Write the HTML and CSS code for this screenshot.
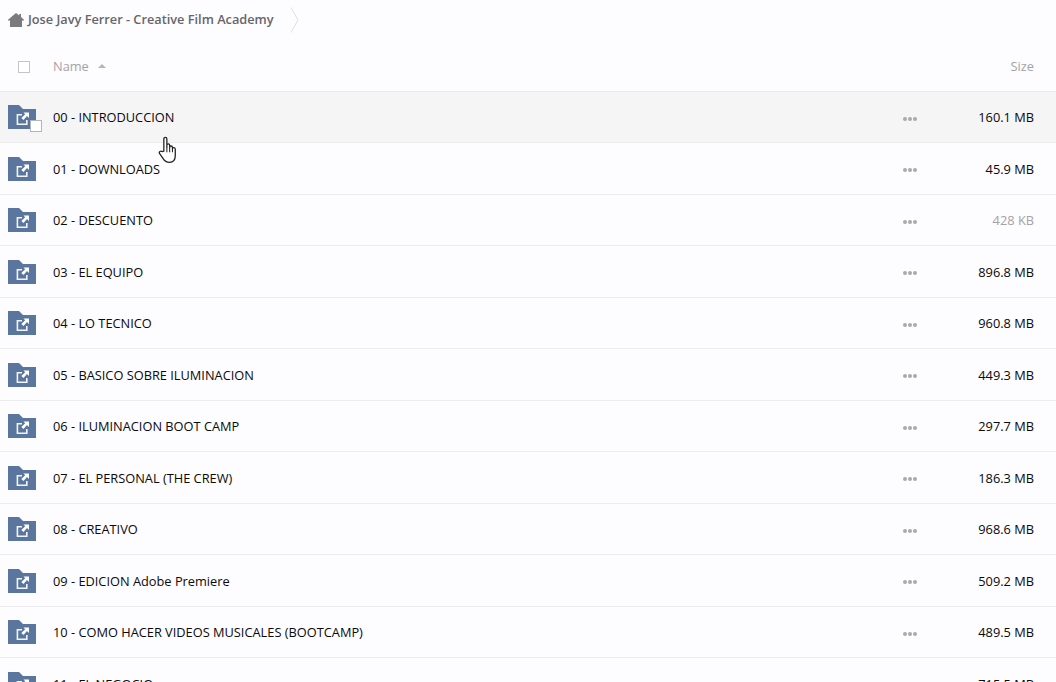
FILE: index.html
```html
<!DOCTYPE html>
<html lang="es">
<head>
<meta charset="utf-8">
<title>Jose Javy Ferrer - Creative Film Academy</title>
<link rel="stylesheet" href="styles.css">
</head>
<body>
<svg width="0" height="0" class="defs">
  <symbol id="folder" viewBox="0 0 28 24">
    <path d="M0 0H11L15 4H28V24H0Z" fill="#5a769f"/>
    <path d="M9 9H14V10.6H10.2V18.4H18V15H19.6V20H8.6V9Z" fill="#fff" opacity=".92"/>
    <path d="M15.5 7.5L21 7.5V13L19 11L15.5 15L13.3 13L17.2 9.3Z" fill="#fff"/>
  </symbol>
</svg>
<nav class="crumbs">
  <svg class="home" width="16" height="14" viewBox="0 0 16 14"><path d="M8 0L11.2 2.6V1H13V4.1L16 6.8V7.6H14V14H2V7.6H0V6.8Z" fill="#7b7b7d"/></svg>
  <span class="crumb">Jose Javy Ferrer - Creative Film Academy</span>
  <svg class="chev" width="9" height="26" viewBox="0 0 9 26"><path d="M1 .5L8 13L1 25.5" fill="none" stroke="#dfdfe2" stroke-width="1"/></svg>
</nav>
<div class="head">
  <span class="check"></span>
  <span class="hname">Name <i class="sort"></i></span>
  <span class="hsize">Size</span>
</div>
<main class="list">
  <div class="row hover"><div class="ic"><svg width="28" height="24"><use href="#folder"/></svg><span class="mini"></span></div><span class="name">00 - INTRODUCCION</span><span class="dots"><i></i><i></i><i></i></span><span class="size">160.1 MB</span></div>
  <div class="row"><div class="ic"><svg width="28" height="24"><use href="#folder"/></svg></div><span class="name">01 - DOWNLOADS</span><span class="dots"><i></i><i></i><i></i></span><span class="size">45.9 MB</span></div>
  <div class="row"><div class="ic"><svg width="28" height="24"><use href="#folder"/></svg></div><span class="name">02 - DESCUENTO</span><span class="dots"><i></i><i></i><i></i></span><span class="size dim">428 KB</span></div>
  <div class="row"><div class="ic"><svg width="28" height="24"><use href="#folder"/></svg></div><span class="name">03 - EL EQUIPO</span><span class="dots"><i></i><i></i><i></i></span><span class="size">896.8 MB</span></div>
  <div class="row"><div class="ic"><svg width="28" height="24"><use href="#folder"/></svg></div><span class="name">04 - LO TECNICO</span><span class="dots"><i></i><i></i><i></i></span><span class="size">960.8 MB</span></div>
  <div class="row"><div class="ic"><svg width="28" height="24"><use href="#folder"/></svg></div><span class="name">05 - BASICO SOBRE ILUMINACION</span><span class="dots"><i></i><i></i><i></i></span><span class="size">449.3 MB</span></div>
  <div class="row"><div class="ic"><svg width="28" height="24"><use href="#folder"/></svg></div><span class="name">06 - ILUMINACION BOOT CAMP</span><span class="dots"><i></i><i></i><i></i></span><span class="size">297.7 MB</span></div>
  <div class="row"><div class="ic"><svg width="28" height="24"><use href="#folder"/></svg></div><span class="name">07 - EL PERSONAL (THE CREW)</span><span class="dots"><i></i><i></i><i></i></span><span class="size">186.3 MB</span></div>
  <div class="row"><div class="ic"><svg width="28" height="24"><use href="#folder"/></svg></div><span class="name">08 - CREATIVO</span><span class="dots"><i></i><i></i><i></i></span><span class="size">968.6 MB</span></div>
  <div class="row"><div class="ic"><svg width="28" height="24"><use href="#folder"/></svg></div><span class="name">09 - EDICION Adobe Premiere</span><span class="dots"><i></i><i></i><i></i></span><span class="size">509.2 MB</span></div>
  <div class="row"><div class="ic"><svg width="28" height="24"><use href="#folder"/></svg></div><span class="name">10 - COMO HACER VIDEOS MUSICALES (BOOTCAMP)</span><span class="dots"><i></i><i></i><i></i></span><span class="size">489.5 MB</span></div>
  <div class="row"><div class="ic"><svg width="28" height="24"><use href="#folder"/></svg></div><span class="name">11 - EL NEGOCIO</span><span class="dots"><i></i><i></i><i></i></span><span class="size">715.5 MB</span></div>
</main>
<svg class="cursor" width="21" height="28" viewBox="0 0 18 24"><path d="M5 13V2.6C5 .6 7.6 .6 7.6 2.6V9.4V8C7.6 6.4 10 6.4 10 8V9.6C10 8.2 12.4 8.2 12.4 9.8V10.8C12.4 9.6 14.8 9.6 14.8 11.4V17C14.8 20.4 13 22.6 9.8 22.6C7 22.6 5.6 21.4 4.4 19.4L1.4 15.2C.4 13.6 2.4 12.2 3.6 13.4Z" fill="#fff" stroke="#222" stroke-width="1.1" stroke-linejoin="round"/><path d="M7.6 9.4V14M10 9.6V14M12.4 10.8V14" stroke="#222" stroke-width=".9" fill="none"/></svg>
</body>
</html>
```

FILE: styles.css
```css
* { box-sizing: border-box; }
html, body { height: 100%; }
body {
  margin: 0;
  overflow: hidden;
  position: relative;
  background: #fdfcfe;
  font-family: "Open Sans", "Liberation Sans", sans-serif;
  font-size: 12.8px;
  color: #0a0a0a;
}
.defs { position: absolute; }
.crumbs {
  height: 39px;
  display: flex;
  align-items: center;
  padding-left: 8px;
}
.home { margin-right: 4px; margin-top: 0; }
.crumb { font-weight: 600; font-size: 12.75px; color: #66666a; white-space: nowrap; margin-top: -2px; }
.chev { margin-left: 16px; }
.head {
  height: 52.5px;
  display: flex;
  align-items: center;
  border-bottom: 1px solid #e9e9ec;
  padding: 3px 22px 0 18px;
  color: #a3a3a8;
}
.check {
  width: 12px;
  height: 12px;
  margin-top: 2px;
  border: 1px solid #c4c4c8;
  background: #fff;
}
.hname { margin-left: 23px; flex: 1; margin-top: -1px; }
.hsize { text-align: right; margin-top: -1px; }
.sort {
  display: inline-block;
  width: 0;
  height: 0;
  margin: 0 0 2px 6px;
  border: 4px solid transparent;
  border-top: 0;
  border-bottom: 4px solid #b5b5b9;
  vertical-align: middle;
}
.row {
  height: 51.5px;
  display: flex;
  align-items: center;
  border-bottom: 1px solid #ececef;
  padding: 0 22px 0 8px;
}
.row.hover { background: #f5f5f6; }
.ic {
  position: relative;
  width: 28px;
  height: 24px;
  margin-top: 1px;
  margin-right: 17px;
  flex: none;
}
.ic svg { display: block; }
.mini {
  position: absolute;
  left: 22px;
  top: 15px;
  width: 12px;
  height: 12px;
  background: #fff;
  border: 1px solid #b4b4b8;
}
.name { flex: 1; white-space: nowrap; margin-top: 1px; }
.dots { display: flex; gap: 1px; width: 14px; margin-right: 55px; margin-top: 4px; }
.dots i {
  width: 4px;
  height: 4px;
  border-radius: 50%;
  background: #a9a9ae;
}
.size { width: 62px; text-align: right; white-space: nowrap; margin-top: 1px; }
.size.dim { color: #a3a3a8; }
.cursor { position: absolute; left: 158px; top: 136px; }
```
